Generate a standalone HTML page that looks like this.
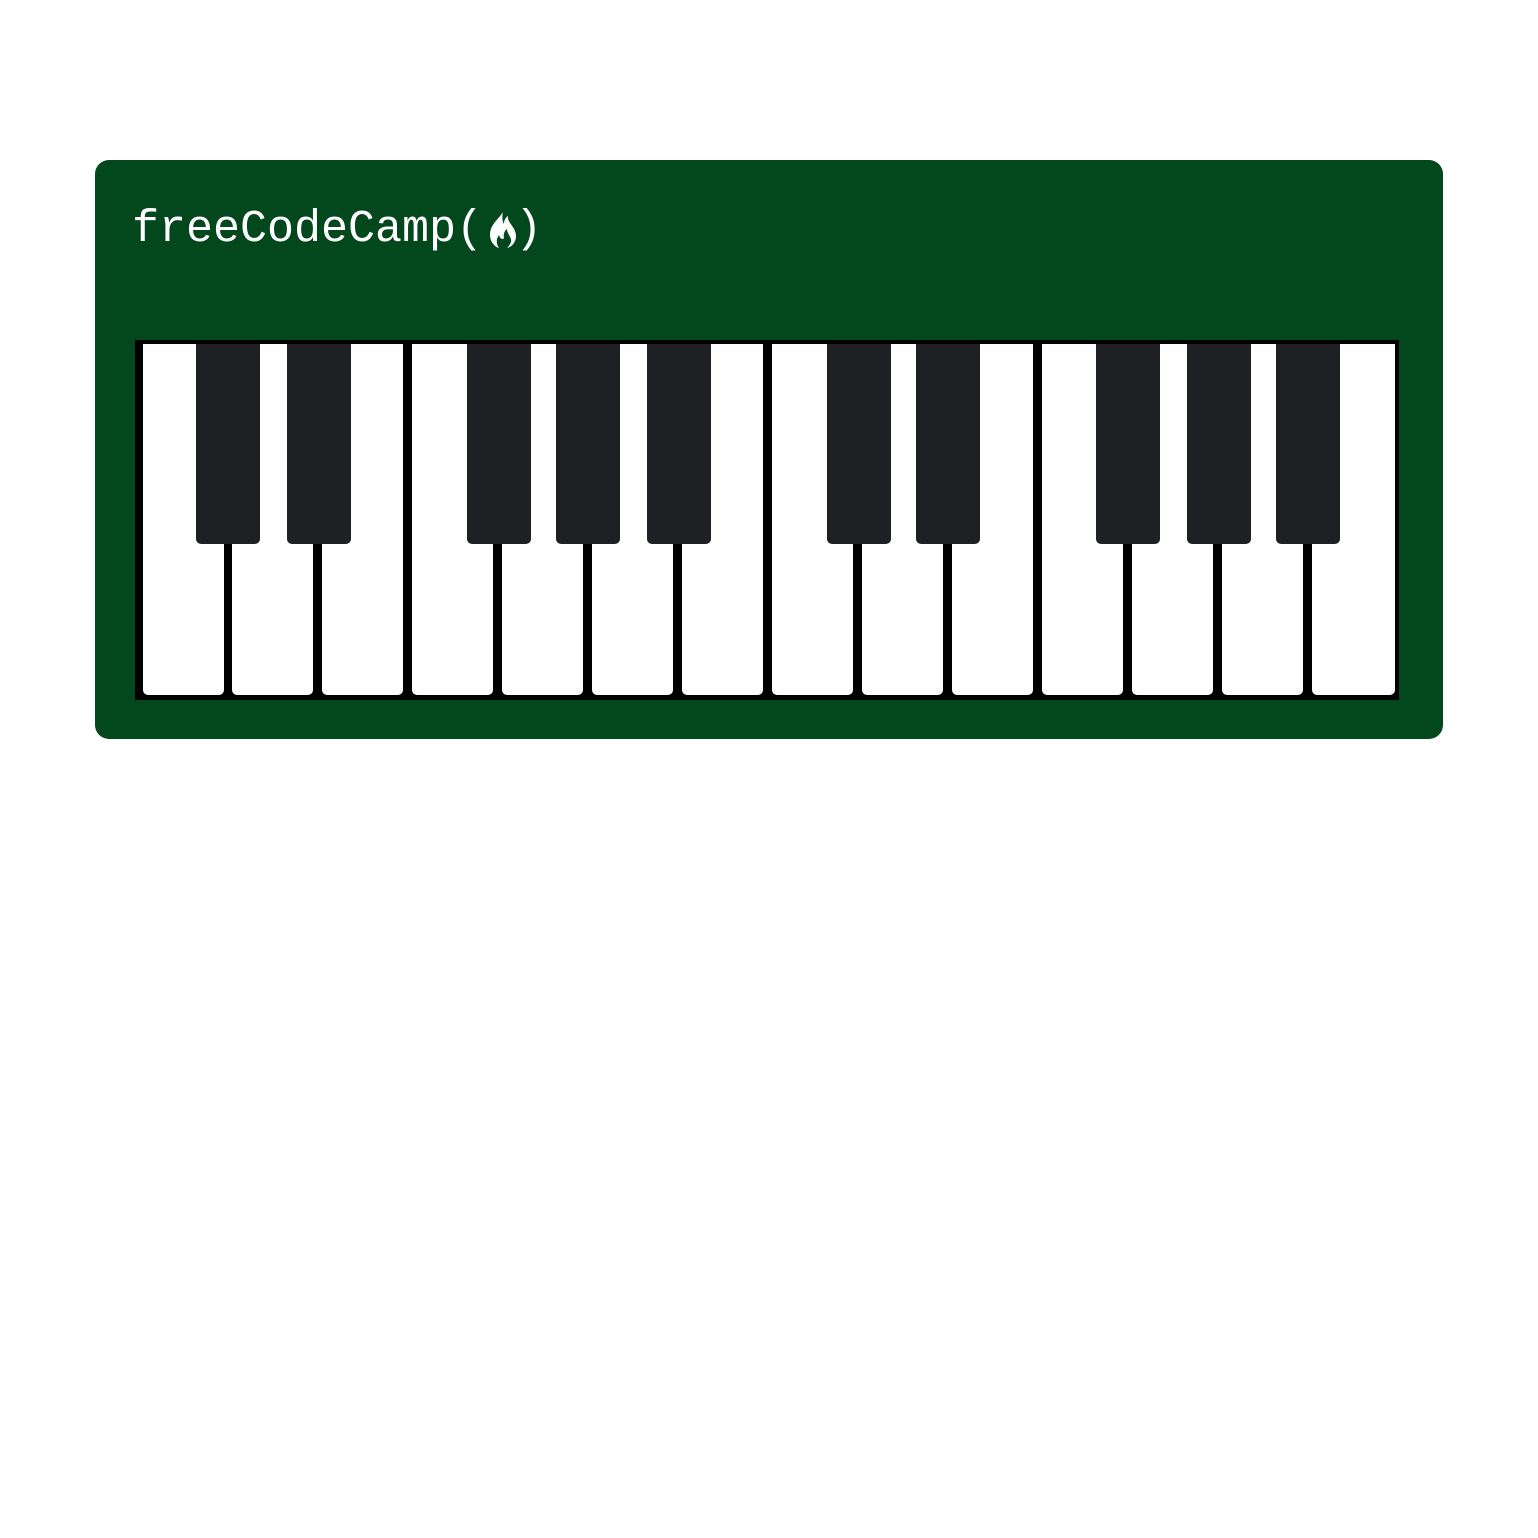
<!DOCTYPE html>
<html><head><meta charset="utf-8"><style>
html,body{margin:0;padding:0;background:#fff;width:1538px;height:1538px;overflow:hidden}
.box{position:absolute;left:95px;top:160px;width:1348px;height:579px;background:#03471d;border-radius:14px}
.logo{position:absolute;left:132px;top:204px;font-family:"Liberation Mono",monospace;font-size:45px;color:#fff;line-height:52px;white-space:pre}
.kb{position:absolute;left:135px;top:340px;width:1264px;height:360px;background:#000}
.w{position:absolute;top:344px;width:81px;height:351px;background:#fff;border-radius:0 0 5px 5px}
.b{position:absolute;top:344px;width:64px;height:200px;background:#1f2023;border-radius:0 0 5px 5px}
</style></head><body>
<div class="box"></div>
<div class="logo">freeCodeCamp(<span style="display:inline-block;width:32px"></span>)</div>
<svg style="position:absolute;left:486px;top:210px" width="34" height="40" viewBox="0 0 34 40">
<path d="M17 2 C13 9 4 14 4 25 C4 32 9 37 13 38 C10 34 10 29 13 25 C14 29 17 30 18 28 C17 24 19 20 21 19 C21 24 26 27 25 32 C24 35 22 37 21 38 C26 37 30 32 30 26 C30 17 21 13 22 6 C19 8 18 11 18 14 C16 11 16 6 17 2 Z" fill="#fff"/>
</svg>
<div class="kb"></div>
<div class="w" style="left:143px"></div>
<div class="w" style="left:232px"></div>
<div class="w" style="left:322px"></div>
<div class="w" style="left:412px"></div>
<div class="w" style="left:502px"></div>
<div class="w" style="left:592px"></div>
<div class="w" style="left:682px"></div>
<div class="w" style="left:772px"></div>
<div class="w" style="left:862px"></div>
<div class="w" style="left:952px"></div>
<div class="w" style="left:1042px"></div>
<div class="w" style="left:1132px"></div>
<div class="w" style="left:1222px"></div>
<div class="w" style="left:1312px;width:83px"></div>
<div class="b" style="left:196px"></div>
<div class="b" style="left:287px"></div>
<div class="b" style="left:467px"></div>
<div class="b" style="left:556px"></div>
<div class="b" style="left:647px"></div>
<div class="b" style="left:827px"></div>
<div class="b" style="left:916px"></div>
<div class="b" style="left:1096px"></div>
<div class="b" style="left:1187px"></div>
<div class="b" style="left:1276px"></div>
</body></html>
